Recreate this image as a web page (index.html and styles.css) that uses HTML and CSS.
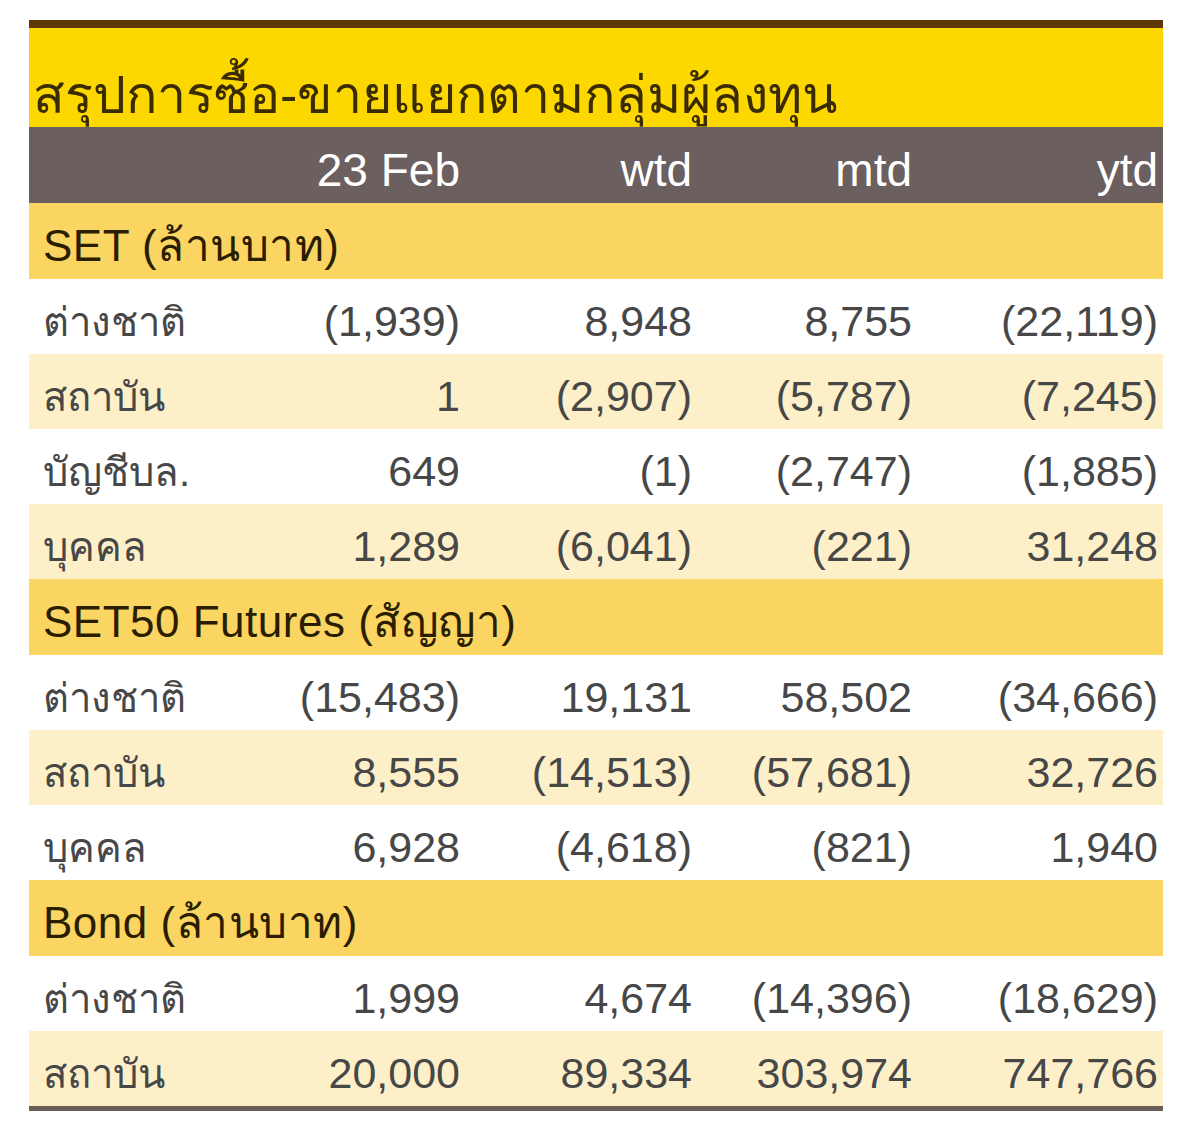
FILE: index.html
```html
<!DOCTYPE html>
<html lang="th">
<head>
<meta charset="utf-8">
<link rel="stylesheet" href="styles.css">
</head>
<body>
<div class="page">
  <div class="sheet">
    <div class="title">สรุปการซื้อ-ขายแยกตามกลุ่มผู้ลงทุน</div>
    <div class="row head">
      <div class="lab"></div><div class="num">23 Feb</div><div class="num">wtd</div><div class="num">mtd</div><div class="num">ytd</div>
    </div>
    <div class="row sec"><div class="sec-lab">SET (ล้านบาท)</div></div>
    <div class="row"><div class="lab">ต่างชาติ</div><div class="num">(1,939)</div><div class="num">8,948</div><div class="num">8,755</div><div class="num">(22,119)</div></div>
    <div class="row alt"><div class="lab">สถาบัน</div><div class="num">1</div><div class="num">(2,907)</div><div class="num">(5,787)</div><div class="num">(7,245)</div></div>
    <div class="row"><div class="lab">บัญชีบล.</div><div class="num">649</div><div class="num">(1)</div><div class="num">(2,747)</div><div class="num">(1,885)</div></div>
    <div class="row alt"><div class="lab">บุคคล</div><div class="num">1,289</div><div class="num">(6,041)</div><div class="num">(221)</div><div class="num">31,248</div></div>
    <div class="row sec"><div class="sec-lab">SET50 Futures (สัญญา)</div></div>
    <div class="row"><div class="lab">ต่างชาติ</div><div class="num">(15,483)</div><div class="num">19,131</div><div class="num">58,502</div><div class="num">(34,666)</div></div>
    <div class="row alt"><div class="lab">สถาบัน</div><div class="num">8,555</div><div class="num">(14,513)</div><div class="num">(57,681)</div><div class="num">32,726</div></div>
    <div class="row"><div class="lab">บุคคล</div><div class="num">6,928</div><div class="num">(4,618)</div><div class="num">(821)</div><div class="num">1,940</div></div>
    <div class="row sec"><div class="sec-lab">Bond (ล้านบาท)</div></div>
    <div class="row"><div class="lab">ต่างชาติ</div><div class="num">1,999</div><div class="num">4,674</div><div class="num">(14,396)</div><div class="num">(18,629)</div></div>
    <div class="row alt last"><div class="lab">สถาบัน</div><div class="num">20,000</div><div class="num">89,334</div><div class="num">303,974</div><div class="num">747,766</div></div>
  </div>
</div>
</body>
</html>
```
FILE: styles.css
```css
html, body {
  margin: 0;
  padding: 0;
  background: #ffffff;
}
.page {
  padding: 20px 37px 0 29px;
  font-family: "Liberation Sans", "DejaVu Sans", "Noto Sans", sans-serif;
}
.sheet {
  width: 1134px;
  border-top: 8px solid #5e3708;
  border-bottom: 5px solid #6b5f55;
}
.title {
  height: 99px;
  background: #fdd800;
  color: #3a2c00;
  font-size: 52px;
  line-height: 99px;
  padding-left: 4px;
  padding-top: 18px;
  box-sizing: border-box;
  white-space: nowrap;
  overflow: hidden;
}
.row {
  display: grid;
  grid-template-columns: 240px 196px 232px 220px 246px;
  height: 75px;
  align-items: center;
  font-size: 43px;
  color: #474747;
  background: #ffffff;
}
.row.alt { background: #fdf0c9; }
.row.head {
  height: 76px;
  background: #6b5f5f;
  color: #ffffff;
  font-size: 46px;
}
.row.sec {
  height: 76px;
  background: #fad561;
  color: #2b1d00;
  display: flex;
  font-size: 44px;
}
.lab {
  padding-left: 14px;
  white-space: nowrap;
  padding-top: 10px;
  font-size: 40px;
}
.sec-lab {
  padding-left: 14px;
  white-space: nowrap;
  padding-top: 8px;
  letter-spacing: 0.5px;
}
.num {
  text-align: right;
  padding-right: 5px;
  white-space: nowrap;
  padding-top: 10px;
}
```
